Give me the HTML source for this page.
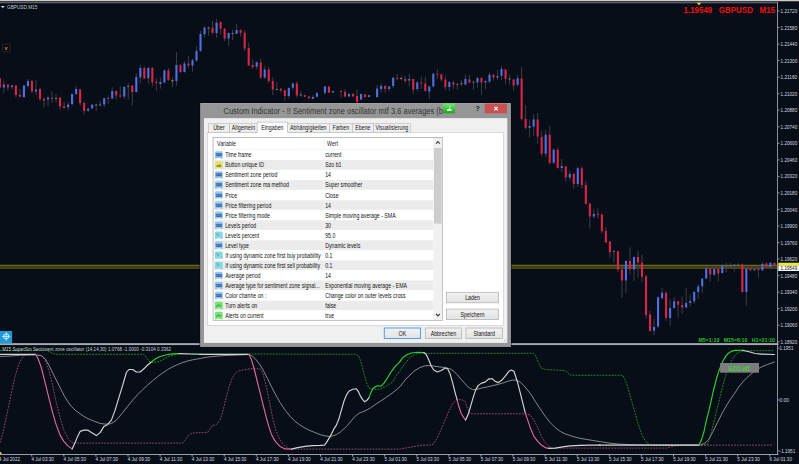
<!DOCTYPE html>
<html lang="de"><head><meta charset="utf-8"><title>GBPUSD,M15</title>
<style>html,body{margin:0;padding:0;background:#080e18;overflow:hidden}svg{display:block;font-family:"Liberation Sans",sans-serif}text{white-space:pre}</style></head><body>
<svg width="799" height="464" viewBox="0 0 799 464">
<rect width="799" height="464" fill="#080e18"/>
<g id="frame">
<rect x="0" y="0" width="799" height="1" fill="#cacaca"/>
<rect x="0" y="1" width="799" height="1" fill="#3a3e44"/>
<rect x="0" y="2" width="778" height="1" fill="#585e66"/>
<rect x="0" y="3" width="777" height="1" fill="#222832"/>
<rect x="777" y="2" width="1" height="453" fill="#8a9098"/>
<rect x="0" y="343.15" width="778.5" height="1.9" fill="#a6abb0"/>
<rect x="0" y="454" width="778.5" height="1" fill="#9aa0a6"/>
</g>
<g id="bidline">
<rect x="0" y="264" width="777" height="5.6" fill="#02061a"/>
<rect x="0" y="264.7" width="777" height="1.7" fill="#6b6b14"/>
<rect x="0" y="266.4" width="777" height="0.8" fill="#3a4416"/>
<rect x="0" y="267.2" width="777" height="1.7" fill="#5a4a14"/>
</g>
<g id="candles">
<path d="M-0.15,78.0V88.0M3.86,81.2V92.9M7.88,84.5V90.4M11.89,84.7V89.5M15.90,85.0V97.5M19.92,89.0V97.0M23.93,85.0V98.0M27.94,79.0V87.5M31.96,80.0V93.5M35.97,80.0V95.0M39.98,88.2V101.0M44.00,97.2V107.2M48.01,96.6V106.2M52.03,91.2V102.9M56.04,94.0V102.2M60.05,97.2V109.7M64.07,102.0V108.5M68.08,102.2V110.0M72.09,93.7V106.0M76.11,86.0V95.4M80.12,89.0V105.4M84.13,101.6V114.5M88.15,107.9V112.0M92.16,104.0V109.0M96.17,103.5V111.2M100.19,100.7V106.4M104.20,97.6V107.2M108.21,95.7V103.9M112.23,87.0V99.1M116.24,90.1V99.5M120.25,86.4V98.0M124.27,86.0V99.1M128.28,83.2V99.5M132.30,84.9V105.5M136.31,73.2V92.6M140.32,64.7V83.5M144.34,66.4V78.9M148.35,67.0V83.5M152.36,67.0V86.6M156.38,78.2V90.7M160.39,77.6V88.6M164.40,69.5V83.2M168.42,68.2V81.0M172.43,77.2V87.0M176.44,52.1V85.7M180.46,64.0V72.6M184.47,61.2V72.6M188.48,55.9V68.4M192.50,58.7V71.7M196.51,46.2V61.7M200.52,30.9V51.7M204.54,26.1V37.7M208.55,26.5V35.5M212.57,20.9V34.6M216.58,19.0V38.0M220.59,21.5V34.6M224.61,28.0V40.9M228.62,32.5V45.9M232.63,29.6V40.0M236.65,24.0V34.2M240.66,29.2V36.5M244.67,30.0V50.9M248.69,42.7V65.9M252.70,59.6V69.0M256.71,61.3V69.6M260.73,58.7V79.0M264.74,65.9V79.0M268.75,66.7V83.0M272.77,77.1V95.2M276.78,82.1V90.0M280.80,87.7V92.5M284.81,89.6V100.9M288.82,87.1V98.4M292.84,82.7V90.0M296.85,80.9V97.7M300.86,90.9V96.5M304.88,94.6V97.1M308.89,95.9V99.6M312.90,95.2V99.0M316.92,92.1V97.1M324.94,85.9V94.6M328.96,85.9V93.0M332.97,90.9V92.5M341.00,90.0V97.7M345.01,89.0V97.1M349.02,93.4V96.7M353.04,92.7V96.7M357.05,89.6V104.0M361.06,93.4V100.2M365.08,94.0V97.5M369.09,94.6V97.1M377.12,85.0V98.0M381.13,83.4V92.7M385.15,85.2V92.7M389.16,85.9V91.2M393.17,76.7V88.4M397.19,74.0V80.2M401.20,75.9V80.2M405.21,75.9V82.7M409.23,74.0V86.5M413.24,78.4V94.0M417.25,80.9V91.5M421.27,76.7V89.0M425.28,76.7V91.5M429.29,85.9V99.2M433.31,72.7V87.7M437.32,69.1V79.2M441.33,73.5V81.7M445.35,75.7V90.1M449.36,81.4V91.0M453.38,80.7V88.9M457.39,82.6V89.7M461.40,80.1V86.4M465.42,74.7V85.1M469.43,75.1V83.2M473.44,80.5V89.7M477.46,76.7V87.6M481.47,77.0V95.1M485.48,80.5V89.5M489.50,72.6V83.5M493.51,73.9V80.7M497.52,70.1V80.1M501.54,66.0V80.1M505.55,68.9V84.2M509.56,74.5V84.7M513.58,78.9V90.5M517.59,75.1V86.7M521.61,66.9V120.6M525.62,105.2V129.4M529.63,119.4V137.5M533.65,114.4V135.6M537.66,113.1V143.7M541.67,130.6V156.5M545.69,130.0V157.2M549.70,125.9V164.5M553.71,148.3V164.2M557.73,147.6V168.6M561.74,159.0V172.4M565.75,165.7V181.5M569.77,170.7V180.5M573.78,172.4V188.6M577.79,166.7V186.7M581.81,166.5V188.6M585.82,180.7V204.5M589.83,202.9V228.5M593.85,208.5V218.5M597.86,207.9V218.5M601.88,213.7V233.5M605.89,227.2V242.9M609.90,241.0V257.7M613.92,250.2V262.7M617.93,250.9V272.1M621.94,265.9V297.8M625.96,260.2V292.8M629.97,247.4V274.6M633.98,256.5V280.9M638.00,250.9V277.7M642.01,254.6V282.1M646.02,274.6V318.7M650.04,311.0V331.6M654.05,319.1V335.0M658.06,296.6V327.9M662.08,287.6V299.7M666.09,291.6V321.0M670.10,299.1V326.0M674.12,297.2V308.5M678.13,300.7V317.2M682.14,296.6V313.7M686.16,287.9V308.2M690.17,294.7V306.6M694.19,291.2V304.1M698.20,284.0V299.0M702.21,278.1V292.7M706.23,267.5V279.0M710.24,265.6V281.5M714.25,265.6V276.2M718.27,268.5V281.5M722.28,264.0V273.5M726.29,262.7V272.2M730.31,263.1V267.5M734.32,264.0V271.5M738.33,263.1V267.5M742.35,263.5V292.5M746.36,268.1V305.6M750.37,265.6V271.5M754.39,267.5V270.6M758.40,265.6V277.7M762.41,262.2V271.0M766.43,262.5V268.1M770.44,262.2V269.4M774.46,262.5V266.9" stroke="#3e3e40" stroke-width="1" fill="none"/>
<path d="M-1.20,78.2h2.1v9.3h-2.1zM6.83,84.5h2.1v3.0h-2.1zM14.85,85.4h2.1v9.6h-2.1zM18.87,95.0h2.1v1.7h-2.1zM30.91,81.0h2.1v10.6h-2.1zM38.94,88.9h2.1v10.1h-2.1zM42.95,98.7h2.1v1.9h-2.1zM50.98,97.7h2.1v1.0h-2.1zM59.00,97.5h2.1v9.1h-2.1zM63.02,106.2h2.1v1.7h-2.1zM79.07,89.5h2.1v13.5h-2.1zM83.08,103.0h2.1v8.0h-2.1zM107.16,98.0h2.1v1.1h-2.1zM115.19,91.0h2.1v4.5h-2.1zM119.20,95.4h2.1v1.2h-2.1zM131.25,85.4h2.1v6.6h-2.1zM143.29,67.9h2.1v10.6h-2.1zM151.31,67.9h2.1v14.7h-2.1zM155.33,81.7h2.1v1.3h-2.1zM167.37,70.4h2.1v9.7h-2.1zM179.41,65.2h2.1v7.0h-2.1zM187.43,63.4h2.1v2.1h-2.1zM211.52,27.7h2.1v5.0h-2.1zM219.54,22.1h2.1v6.6h-2.1zM223.56,28.7h2.1v9.7h-2.1zM239.61,30.2h2.1v2.5h-2.1zM243.62,32.7h2.1v15.7h-2.1zM247.64,48.1h2.1v17.4h-2.1zM251.65,65.1h2.1v1.8h-2.1zM259.68,62.5h2.1v15.0h-2.1zM267.70,69.4h2.1v11.5h-2.1zM271.72,81.1h2.1v8.5h-2.1zM279.75,88.7h2.1v1.8h-2.1zM283.76,90.2h2.1v5.7h-2.1zM295.80,83.4h2.1v12.1h-2.1zM303.83,95.2h2.1v1.5h-2.1zM307.84,96.5h2.1v1.5h-2.1zM327.91,86.5h2.1v6.2h-2.1zM339.95,90.9h2.1v1.0h-2.1zM343.96,92.1h2.1v4.4h-2.1zM351.99,94.0h2.1v2.5h-2.1zM356.00,95.9h2.1v7.1h-2.1zM364.03,94.6h2.1v2.5h-2.1zM384.10,86.1h2.1v2.9h-2.1zM396.14,77.7h2.1v1.0h-2.1zM404.16,79.0h2.1v2.1h-2.1zM412.19,79.0h2.1v10.6h-2.1zM420.22,82.5h2.1v1.0h-2.1zM424.23,83.4h2.1v7.5h-2.1zM436.27,73.8h2.1v1.0h-2.1zM440.28,74.2h2.1v5.3h-2.1zM444.30,79.5h2.1v7.5h-2.1zM452.33,82.4h2.1v2.3h-2.1zM468.38,79.5h2.1v2.9h-2.1zM480.42,77.9h2.1v4.7h-2.1zM492.46,75.1h2.1v2.5h-2.1zM504.50,69.5h2.1v9.4h-2.1zM512.53,79.5h2.1v5.9h-2.1zM520.56,78.4h2.1v40.6h-2.1zM524.57,119.0h2.1v8.7h-2.1zM536.61,119.6h2.1v17.0h-2.1zM540.62,137.1h2.1v16.6h-2.1zM548.65,134.7h2.1v28.0h-2.1zM556.68,149.8h2.1v18.2h-2.1zM564.70,166.4h2.1v11.0h-2.1zM572.73,173.9h2.1v10.0h-2.1zM580.76,168.2h2.1v16.7h-2.1zM584.77,184.9h2.1v19.1h-2.1zM588.78,203.4h2.1v13.2h-2.1zM596.81,213.5h2.1v1.2h-2.1zM600.83,214.4h2.1v16.8h-2.1zM604.84,231.0h2.1v11.5h-2.1zM608.85,241.6h2.1v10.6h-2.1zM616.88,251.2h2.1v18.4h-2.1zM620.89,269.4h2.1v11.2h-2.1zM628.92,260.9h2.1v8.3h-2.1zM636.95,257.1h2.1v5.4h-2.1zM640.96,262.7h2.1v14.0h-2.1zM644.97,276.2h2.1v38.8h-2.1zM648.99,314.5h2.1v16.5h-2.1zM665.04,292.8h2.1v25.1h-2.1zM677.08,301.2h2.1v3.5h-2.1zM681.10,305.0h2.1v2.5h-2.1zM709.19,268.5h2.1v5.9h-2.1zM717.22,269.0h2.1v4.5h-2.1zM741.30,264.4h2.1v27.5h-2.1zM749.32,268.5h2.1v1.7h-2.1zM757.35,268.7h2.1v1.3h-2.1zM765.38,263.5h2.1v3.4h-2.1zM773.41,263.1h2.1v2.5h-2.1z" fill="#dc2348"/>
<path d="M2.81,84.5h2.1v3.0h-2.1zM10.84,85.4h2.1v1.5h-2.1zM22.88,85.4h2.1v11.6h-2.1zM26.89,81.0h2.1v5.0h-2.1zM34.92,89.5h2.1v2.1h-2.1zM46.96,97.5h2.1v2.0h-2.1zM67.03,104.5h2.1v2.7h-2.1zM71.04,94.0h2.1v9.9h-2.1zM75.06,88.9h2.1v5.1h-2.1zM87.10,108.7h2.1v2.0h-2.1zM91.11,104.7h2.1v3.8h-2.1zM103.15,98.2h2.1v6.3h-2.1zM111.18,91.0h2.1v7.6h-2.1zM123.22,87.0h2.1v9.6h-2.1zM127.23,85.7h2.1v1.3h-2.1zM135.26,77.0h2.1v15.0h-2.1zM139.27,67.9h2.1v9.7h-2.1zM147.30,67.9h2.1v10.3h-2.1zM159.34,82.0h2.1v1.9h-2.1zM163.35,70.4h2.1v12.2h-2.1zM175.39,65.0h2.1v16.0h-2.1zM183.42,63.4h2.1v8.6h-2.1zM191.45,60.2h2.1v5.3h-2.1zM195.46,51.1h2.1v9.4h-2.1zM199.47,34.0h2.1v17.1h-2.1zM203.49,27.7h2.1v6.5h-2.1zM215.53,22.7h2.1v10.3h-2.1zM227.57,33.0h2.1v5.4h-2.1zM235.60,30.0h2.1v3.7h-2.1zM255.66,62.3h2.1v4.5h-2.1zM263.69,69.4h2.1v8.1h-2.1zM287.77,88.0h2.1v7.9h-2.1zM291.79,83.4h2.1v4.3h-2.1zM311.85,97.1h2.1v1.6h-2.1zM315.87,93.0h2.1v3.7h-2.1zM323.89,86.5h2.1v6.2h-2.1zM331.92,90.9h2.1v1.6h-2.1zM347.97,94.0h2.1v2.5h-2.1zM360.01,94.0h2.1v5.6h-2.1zM368.04,95.2h2.1v1.7h-2.1zM376.07,88.4h2.1v8.7h-2.1zM380.08,86.1h2.1v2.9h-2.1zM388.11,86.5h2.1v2.5h-2.1zM392.12,77.7h2.1v8.2h-2.1zM408.18,79.0h2.1v1.6h-2.1zM416.20,82.5h2.1v6.5h-2.1zM428.24,86.5h2.1v5.0h-2.1zM432.26,73.8h2.1v12.6h-2.1zM448.31,82.0h2.1v5.0h-2.1zM464.37,78.9h2.1v5.6h-2.1zM476.41,77.9h2.1v4.7h-2.1zM484.43,81.0h2.1v1.4h-2.1zM488.45,74.7h2.1v6.9h-2.1zM496.47,76.0h2.1v1.4h-2.1zM500.49,68.9h2.1v6.8h-2.1zM516.54,78.2h2.1v6.5h-2.1zM528.58,125.9h2.1v1.8h-2.1zM532.60,119.6h2.1v7.0h-2.1zM544.64,134.7h2.1v19.0h-2.1zM552.66,149.8h2.1v12.9h-2.1zM560.69,165.9h2.1v2.1h-2.1zM568.72,174.0h2.1v3.4h-2.1zM576.74,168.2h2.1v15.7h-2.1zM592.80,214.1h2.1v2.3h-2.1zM624.91,260.9h2.1v19.7h-2.1zM632.93,257.1h2.1v12.5h-2.1zM653.00,327.0h2.1v3.7h-2.1zM657.01,297.2h2.1v29.4h-2.1zM661.03,292.8h2.1v5.1h-2.1zM669.05,307.9h2.1v10.0h-2.1zM673.07,301.2h2.1v6.7h-2.1zM685.11,302.9h2.1v4.6h-2.1zM689.12,301.2h2.1v1.7h-2.1zM693.14,292.0h2.1v9.2h-2.1zM697.15,286.4h2.1v5.6h-2.1zM701.16,278.7h2.1v7.5h-2.1zM705.18,268.5h2.1v10.0h-2.1zM713.20,269.0h2.1v5.7h-2.1zM721.23,265.6h2.1v7.3h-2.1zM733.27,264.7h2.1v1.3h-2.1zM745.31,268.5h2.1v23.4h-2.1zM753.34,269.0h2.1v1.2h-2.1zM761.37,264.0h2.1v6.2h-2.1zM769.39,262.7h2.1v4.2h-2.1z" fill="#4f6fe6"/>
<path d="M54.99,98.0h2.1v0.9h-2.1zM95.12,104.5h2.1v0.9h-2.1zM99.14,104.5h2.1v1.0h-2.1zM171.38,80.1h2.1v1.3h-2.1zM207.50,27.5h2.1v0.9h-2.1zM231.58,33.0h2.1v1.0h-2.1zM275.73,89.0h2.1v0.9h-2.1zM299.81,94.6h2.1v0.9h-2.1zM400.15,78.0h2.1v1.0h-2.1zM456.34,83.9h2.1v0.9h-2.1zM460.35,83.2h2.1v1.0h-2.1zM472.39,81.7h2.1v0.9h-2.1zM508.51,78.6h2.1v0.9h-2.1zM612.87,250.9h2.1v0.9h-2.1zM725.24,265.6h2.1v0.9h-2.1zM729.26,265.6h2.1v0.9h-2.1zM737.28,264.7h2.1v0.9h-2.1z" fill="#808080"/>
</g>
<g id="priceaxis">
<rect x="778" y="10.5" width="1.6" height="1" fill="#8a9098"/>
<text x="780.60" y="13.05" font-size="5.8" fill="#d4dae0" textLength="16.60" lengthAdjust="spacingAndGlyphs">1.21720</text>
<rect x="778" y="27.0" width="1.6" height="1" fill="#8a9098"/>
<text x="780.60" y="29.59" font-size="5.8" fill="#d4dae0" textLength="16.60" lengthAdjust="spacingAndGlyphs">1.21580</text>
<rect x="778" y="43.6" width="1.6" height="1" fill="#8a9098"/>
<text x="780.60" y="46.13" font-size="5.8" fill="#d4dae0" textLength="16.60" lengthAdjust="spacingAndGlyphs">1.21440</text>
<rect x="778" y="60.1" width="1.6" height="1" fill="#8a9098"/>
<text x="780.60" y="62.67" font-size="5.8" fill="#d4dae0" textLength="16.60" lengthAdjust="spacingAndGlyphs">1.21300</text>
<rect x="778" y="76.7" width="1.6" height="1" fill="#8a9098"/>
<text x="780.60" y="79.21" font-size="5.8" fill="#d4dae0" textLength="16.60" lengthAdjust="spacingAndGlyphs">1.21160</text>
<rect x="778" y="93.2" width="1.6" height="1" fill="#8a9098"/>
<text x="780.60" y="95.75" font-size="5.8" fill="#d4dae0" textLength="16.60" lengthAdjust="spacingAndGlyphs">1.21020</text>
<rect x="778" y="109.7" width="1.6" height="1" fill="#8a9098"/>
<text x="780.60" y="112.29" font-size="5.8" fill="#d4dae0" textLength="16.60" lengthAdjust="spacingAndGlyphs">1.20880</text>
<rect x="778" y="126.3" width="1.6" height="1" fill="#8a9098"/>
<text x="780.60" y="128.83" font-size="5.8" fill="#d4dae0" textLength="16.60" lengthAdjust="spacingAndGlyphs">1.20740</text>
<rect x="778" y="142.8" width="1.6" height="1" fill="#8a9098"/>
<text x="780.60" y="145.37" font-size="5.8" fill="#d4dae0" textLength="16.60" lengthAdjust="spacingAndGlyphs">1.20600</text>
<rect x="778" y="159.4" width="1.6" height="1" fill="#8a9098"/>
<text x="780.60" y="161.91" font-size="5.8" fill="#d4dae0" textLength="16.60" lengthAdjust="spacingAndGlyphs">1.20460</text>
<rect x="778" y="175.9" width="1.6" height="1" fill="#8a9098"/>
<text x="780.60" y="178.45" font-size="5.8" fill="#d4dae0" textLength="16.60" lengthAdjust="spacingAndGlyphs">1.20320</text>
<rect x="778" y="192.4" width="1.6" height="1" fill="#8a9098"/>
<text x="780.60" y="194.99" font-size="5.8" fill="#d4dae0" textLength="16.60" lengthAdjust="spacingAndGlyphs">1.20180</text>
<rect x="778" y="209.0" width="1.6" height="1" fill="#8a9098"/>
<text x="780.60" y="211.53" font-size="5.8" fill="#d4dae0" textLength="16.60" lengthAdjust="spacingAndGlyphs">1.20040</text>
<rect x="778" y="225.5" width="1.6" height="1" fill="#8a9098"/>
<text x="780.60" y="228.07" font-size="5.8" fill="#d4dae0" textLength="16.60" lengthAdjust="spacingAndGlyphs">1.19900</text>
<rect x="778" y="242.1" width="1.6" height="1" fill="#8a9098"/>
<text x="780.60" y="244.61" font-size="5.8" fill="#d4dae0" textLength="16.60" lengthAdjust="spacingAndGlyphs">1.19760</text>
<rect x="778" y="258.6" width="1.6" height="1" fill="#8a9098"/>
<text x="780.60" y="261.15" font-size="5.8" fill="#d4dae0" textLength="16.60" lengthAdjust="spacingAndGlyphs">1.19620</text>
<rect x="778" y="275.1" width="1.6" height="1" fill="#8a9098"/>
<text x="780.60" y="277.69" font-size="5.8" fill="#d4dae0" textLength="16.60" lengthAdjust="spacingAndGlyphs">1.19480</text>
<rect x="778" y="291.7" width="1.6" height="1" fill="#8a9098"/>
<text x="780.60" y="294.23" font-size="5.8" fill="#d4dae0" textLength="16.60" lengthAdjust="spacingAndGlyphs">1.19340</text>
<rect x="778" y="308.2" width="1.6" height="1" fill="#8a9098"/>
<text x="780.60" y="310.77" font-size="5.8" fill="#d4dae0" textLength="16.60" lengthAdjust="spacingAndGlyphs">1.19200</text>
<rect x="778" y="324.8" width="1.6" height="1" fill="#8a9098"/>
<text x="780.60" y="327.31" font-size="5.8" fill="#d4dae0" textLength="16.60" lengthAdjust="spacingAndGlyphs">1.19060</text>
<rect x="778" y="341.3" width="1.6" height="1" fill="#8a9098"/>
<text x="780.60" y="343.85" font-size="5.8" fill="#d4dae0" textLength="16.60" lengthAdjust="spacingAndGlyphs">1.18920</text>
<rect x="778.3" y="265.2" width="20.7" height="5.8" fill="#f6f6f2"/>
<rect x="778.3" y="262.75" width="20.7" height="2.5" fill="#ecec20"/>
<text x="780.60" y="269.80" font-size="5.4" fill="#181828" textLength="16.60" lengthAdjust="spacingAndGlyphs">1.19549</text>
<text x="779.60" y="350.05" font-size="5.8" fill="#d4dae0" textLength="13.80" lengthAdjust="spacingAndGlyphs">1.1951</text>
<text x="779.60" y="402.05" font-size="5.8" fill="#d4dae0" textLength="9.20" lengthAdjust="spacingAndGlyphs">0.00</text>
<text x="779.60" y="452.85" font-size="5.8" fill="#d4dae0" textLength="15.60" lengthAdjust="spacingAndGlyphs">-1.1951</text>
<rect x="778" y="347.5" width="1.6" height="1" fill="#8a9098"/>
<rect x="778" y="399.5" width="1.6" height="1" fill="#8a9098"/>
<rect x="778" y="450.3" width="1.6" height="1" fill="#8a9098"/>
</g>
<g id="timeaxis">
<rect x="-0.9" y="455" width="1" height="1.6" fill="#9aa0a6"/>
<text x="-1.20" y="461.00" font-size="5.8" fill="#d4dae0" textLength="21.20" lengthAdjust="spacingAndGlyphs">4 Jul 2022</text>
<rect x="31.2" y="455" width="1" height="1.6" fill="#9aa0a6"/>
<text x="31.39" y="461.00" font-size="5.8" fill="#d4dae0" textLength="22.50" lengthAdjust="spacingAndGlyphs">4 Jul 03:30</text>
<rect x="63.3" y="455" width="1" height="1.6" fill="#9aa0a6"/>
<text x="63.48" y="461.00" font-size="5.8" fill="#d4dae0" textLength="22.50" lengthAdjust="spacingAndGlyphs">4 Jul 05:30</text>
<rect x="95.4" y="455" width="1" height="1.6" fill="#9aa0a6"/>
<text x="95.57" y="461.00" font-size="5.8" fill="#d4dae0" textLength="22.50" lengthAdjust="spacingAndGlyphs">4 Jul 07:30</text>
<rect x="127.5" y="455" width="1" height="1.6" fill="#9aa0a6"/>
<text x="127.66" y="461.00" font-size="5.8" fill="#d4dae0" textLength="22.50" lengthAdjust="spacingAndGlyphs">4 Jul 09:30</text>
<rect x="159.6" y="455" width="1" height="1.6" fill="#9aa0a6"/>
<text x="159.75" y="461.00" font-size="5.8" fill="#d4dae0" textLength="22.50" lengthAdjust="spacingAndGlyphs">4 Jul 11:30</text>
<rect x="191.6" y="455" width="1" height="1.6" fill="#9aa0a6"/>
<text x="191.84" y="461.00" font-size="5.8" fill="#d4dae0" textLength="22.50" lengthAdjust="spacingAndGlyphs">4 Jul 13:30</text>
<rect x="223.7" y="455" width="1" height="1.6" fill="#9aa0a6"/>
<text x="223.93" y="461.00" font-size="5.8" fill="#d4dae0" textLength="22.50" lengthAdjust="spacingAndGlyphs">4 Jul 15:30</text>
<rect x="255.8" y="455" width="1" height="1.6" fill="#9aa0a6"/>
<text x="256.02" y="461.00" font-size="5.8" fill="#d4dae0" textLength="22.50" lengthAdjust="spacingAndGlyphs">4 Jul 17:30</text>
<rect x="287.9" y="455" width="1" height="1.6" fill="#9aa0a6"/>
<text x="288.11" y="461.00" font-size="5.8" fill="#d4dae0" textLength="22.50" lengthAdjust="spacingAndGlyphs">4 Jul 19:30</text>
<rect x="320.0" y="455" width="1" height="1.6" fill="#9aa0a6"/>
<text x="320.20" y="461.00" font-size="5.8" fill="#d4dae0" textLength="22.50" lengthAdjust="spacingAndGlyphs">4 Jul 21:30</text>
<rect x="352.1" y="455" width="1" height="1.6" fill="#9aa0a6"/>
<text x="352.29" y="461.00" font-size="5.8" fill="#d4dae0" textLength="22.50" lengthAdjust="spacingAndGlyphs">4 Jul 23:30</text>
<rect x="384.2" y="455" width="1" height="1.6" fill="#9aa0a6"/>
<text x="384.38" y="461.00" font-size="5.8" fill="#d4dae0" textLength="22.50" lengthAdjust="spacingAndGlyphs">5 Jul 01:30</text>
<rect x="416.3" y="455" width="1" height="1.6" fill="#9aa0a6"/>
<text x="416.47" y="461.00" font-size="5.8" fill="#d4dae0" textLength="22.50" lengthAdjust="spacingAndGlyphs">5 Jul 03:30</text>
<rect x="448.4" y="455" width="1" height="1.6" fill="#9aa0a6"/>
<text x="448.56" y="461.00" font-size="5.8" fill="#d4dae0" textLength="22.50" lengthAdjust="spacingAndGlyphs">5 Jul 05:30</text>
<rect x="480.5" y="455" width="1" height="1.6" fill="#9aa0a6"/>
<text x="480.65" y="461.00" font-size="5.8" fill="#d4dae0" textLength="22.50" lengthAdjust="spacingAndGlyphs">5 Jul 07:30</text>
<rect x="512.5" y="455" width="1" height="1.6" fill="#9aa0a6"/>
<text x="512.74" y="461.00" font-size="5.8" fill="#d4dae0" textLength="22.50" lengthAdjust="spacingAndGlyphs">5 Jul 09:30</text>
<rect x="544.6" y="455" width="1" height="1.6" fill="#9aa0a6"/>
<text x="544.83" y="461.00" font-size="5.8" fill="#d4dae0" textLength="22.50" lengthAdjust="spacingAndGlyphs">5 Jul 11:30</text>
<rect x="576.7" y="455" width="1" height="1.6" fill="#9aa0a6"/>
<text x="576.92" y="461.00" font-size="5.8" fill="#d4dae0" textLength="22.50" lengthAdjust="spacingAndGlyphs">5 Jul 13:30</text>
<rect x="608.8" y="455" width="1" height="1.6" fill="#9aa0a6"/>
<text x="609.01" y="461.00" font-size="5.8" fill="#d4dae0" textLength="22.50" lengthAdjust="spacingAndGlyphs">5 Jul 15:30</text>
<rect x="640.9" y="455" width="1" height="1.6" fill="#9aa0a6"/>
<text x="641.10" y="461.00" font-size="5.8" fill="#d4dae0" textLength="22.50" lengthAdjust="spacingAndGlyphs">5 Jul 17:30</text>
<rect x="673.0" y="455" width="1" height="1.6" fill="#9aa0a6"/>
<text x="673.19" y="461.00" font-size="5.8" fill="#d4dae0" textLength="22.50" lengthAdjust="spacingAndGlyphs">5 Jul 19:30</text>
<rect x="705.1" y="455" width="1" height="1.6" fill="#9aa0a6"/>
<text x="705.28" y="461.00" font-size="5.8" fill="#d4dae0" textLength="22.50" lengthAdjust="spacingAndGlyphs">5 Jul 21:30</text>
<rect x="737.2" y="455" width="1" height="1.6" fill="#9aa0a6"/>
<text x="737.37" y="461.00" font-size="5.8" fill="#d4dae0" textLength="22.50" lengthAdjust="spacingAndGlyphs">5 Jul 23:30</text>
<rect x="769.3" y="455" width="1" height="1.6" fill="#9aa0a6"/>
<text x="769.46" y="461.00" font-size="5.8" fill="#d4dae0" textLength="22.50" lengthAdjust="spacingAndGlyphs">6 Jul 01:30</text>
<path d="M0,451.5 L2.2,454 L0,454z" fill="#f0d020"/>
</g>
<g id="oscillator" fill="none" stroke-linejoin="round" stroke-linecap="round">
<path d="M0.0,350.5 L46.3,350.5 L50.1,352.0 L53.8,353.8 L57.1,354.3 L143.9,354.3 L146.4,357.5 L148.9,361.3 L152.7,362.5 L157.7,361.8 L162.7,360.0 L167.7,357.0 L172.7,355.0 L179.0,353.5 L200.3,354.0 L248.8,354.0 L356.4,354.3 L358.9,356.3 L361.5,363.8 L364.0,373.8 L366.5,382.6 L369.0,388.1 L372.7,389.3 L377.7,389.3 L380.0,388.8 L386.2,386.3 L392.5,382.1 L396.2,375.8 L400.0,370.8 L405.0,363.3 L410.0,357.5 L415.0,354.0 L420.0,353.3 L533.9,353.3 L536.4,357.5 L538.9,363.8 L541.4,368.0 L545.2,369.5 L565.2,370.5 L567.7,373.0 L570.2,375.0 L575.2,375.3 L600.3,375.3 L622.8,375.3 L625.3,380.1 L627.8,387.6 L630.3,396.3 L632.8,405.1 L635.3,413.8 L637.8,422.6 L640.3,430.1 L642.8,436.4 L645.3,440.9 L647.8,443.9 L651.6,445.1 L700.4,445.1 L706.9,445.0 L708.8,441.2 L711.2,432.5 L713.8,422.5 L716.2,412.5 L718.8,402.5 L721.2,392.0 L723.1,384.5 L725.6,375.8 L728.1,368.9 L731.2,361.4 L733.8,357.0 L736.2,353.9 L740.0,351.8 L745.0,350.8 L773.1,350.5" stroke="#1f8c2a" stroke-width="1" stroke-dasharray="1.8,1.2" stroke-linecap="butt"/>
<path d="M0.0,442.6 L3.0,432.6 L7.0,413.8 L11.0,395.1 L14.8,377.5 L18.5,365.0 L22.0,358.0 L25.0,355.0 L35.0,354.8 L41.3,355.8 L45.1,360.0 L48.8,370.0 L52.6,385.1 L56.3,402.6 L60.1,417.6 L63.8,430.1 L67.6,437.6 L71.3,442.1 L73.8,443.1 L182.7,443.1 L185.2,440.1 L187.7,436.4 L190.2,433.9 L192.7,433.1 L200.3,432.6 L207.5,432.6 L210.0,428.9 L212.5,425.6 L216.3,424.6 L220.0,420.1 L222.5,412.6 L225.0,402.6 L227.5,392.6 L230.0,383.8 L232.5,377.5 L235.0,373.8 L237.5,371.3 L242.6,370.0 L250.1,368.8 L260.1,368.8 L262.6,372.5 L265.1,381.3 L267.6,392.6 L270.1,405.1 L272.6,417.6 L275.1,427.6 L277.6,435.1 L280.1,440.1 L283.9,445.1 L287.6,448.1 L291.4,449.1 L400.3,449.1 L407.5,447.6 L415.0,446.4 L422.5,445.1 L430.0,445.1 L433.8,443.9 L437.5,437.6 L441.3,428.9 L445.1,420.1 L448.8,411.3 L452.6,403.8 L456.3,400.1 L461.3,399.6 L465.1,401.3 L467.6,408.8 L470.1,413.8 L526.4,413.8 L530.2,415.1 L533.9,420.1 L537.7,427.6 L541.4,436.4 L545.2,442.6 L548.9,446.4 L552.7,448.1 L600.3,448.1 L666.6,448.1 L670.3,447.1 L674.1,445.9 L679.1,445.1 L773.0,445.1" stroke="#94466e" stroke-width="1" stroke-dasharray="1.8,1.2" stroke-linecap="butt"/>
<path d="M0.0,356.5 L10.0,356.0 L20.0,355.3 L35.0,354.8 L41.3,355.5 L45.1,358.8 L48.8,365.0 L52.6,372.5 L56.3,380.1 L60.1,387.6 L63.8,395.1 L67.6,401.3 L71.3,406.3 L75.1,410.1 L80.1,413.8 L85.1,417.1 L90.1,419.6 L95.1,421.6 L100.1,423.4 L105.1,424.1 L110.1,423.9 L113.9,422.1 L117.6,418.8 L122.7,412.6 L127.7,406.3 L132.7,400.1 L137.7,394.6 L142.7,389.6 L147.7,385.1 L152.7,380.6 L157.7,376.5 L162.7,373.0 L167.7,369.5 L172.7,366.8 L177.7,364.5 L182.7,362.5 L187.7,361.0 L192.7,359.8 L200.3,358.5 L207.5,357.0 L215.0,356.3 L225.0,355.5 L237.5,355.0 L248.8,354.5 L252.6,356.3 L256.3,360.0 L260.1,365.0 L263.8,371.3 L267.6,378.8 L271.3,386.3 L275.1,393.8 L280.1,402.6 L285.1,410.1 L290.1,416.3 L295.1,421.4 L300.1,425.1 L305.1,428.1 L310.1,430.6 L315.1,432.6 L320.2,434.6 L325.2,435.9 L328.9,436.4 L332.7,435.9 L336.4,434.6 L340.2,432.1 L343.9,428.9 L347.7,425.1 L351.4,420.6 L355.2,416.3 L358.9,413.3 L362.7,411.8 L366.5,410.1 L370.2,408.1 L375.2,404.6 L380.2,401.3 L385.2,398.1 L390.2,394.6 L395.2,390.8 L400.3,386.3 L405.0,380.1 L410.0,375.0 L415.0,370.5 L420.0,367.5 L425.0,365.8 L430.0,365.5 L435.0,366.3 L440.1,367.0 L445.1,367.5 L450.1,368.8 L453.8,371.3 L457.6,375.0 L461.3,379.5 L465.1,383.8 L468.8,387.6 L472.6,389.6 L476.3,389.6 L481.4,388.1 L487.6,386.8 L495.1,385.1 L502.6,383.1 L507.6,381.3 L512.6,380.1 L516.4,380.1 L520.2,382.1 L523.9,385.6 L527.7,390.1 L531.4,395.1 L535.2,401.3 L540.2,408.8 L545.2,416.3 L550.2,422.6 L555.2,427.6 L560.2,431.4 L565.2,433.9 L572.7,436.4 L580.2,438.4 L587.7,439.6 L595.2,440.9 L600.3,441.6 L609.0,443.1 L619.0,444.1 L629.0,444.6 L649.1,445.1 L698.6,445.1 L700.6,445.0 L705.0,443.1 L708.8,439.4 L712.5,432.5 L717.5,422.5 L722.5,412.5 L727.5,403.8 L730.5,399.2 L733.8,394.5 L738.8,387.0 L743.8,380.8 L748.8,375.8 L755.0,370.8 L761.2,367.0 L767.5,364.5 L774.4,362.0" stroke="#9c9ca0" stroke-width="0.85"/>
<path d="M0.0,354.3 L35.5,354.3" stroke="#d4d4d4" stroke-width="1.15"/>
<path d="M35.5,354.3 L37.8,358.0 L41.3,367.5 L45.1,382.6 L48.8,397.6 L52.6,412.6 L56.3,425.1 L60.1,435.1 L63.8,441.4 L67.6,445.6 L72.1,448.9" stroke="#dc6a94" stroke-width="1.15"/>
<path d="M72.1,448.9 L75.1,442.6 L77.6,436.4 L80.1,431.4 L83.9,430.1 L87.6,430.1 L91.4,432.6 L96.4,435.6 L100.1,432.6 L103.9,426.4 L107.6,424.4 L111.4,420.1 L115.1,410.1 L118.9,397.6 L122.7,385.1 L126.4,372.5 L128.9,369.5 L132.7,369.5 L136.4,372.0 L140.2,372.0 L143.9,368.8 L147.7,365.0 L151.4,362.0" stroke="#d4d4d4" stroke-width="1.15"/>
<path d="M151.4,362.0 L155.2,359.0 L160.2,356.5 L166.5,354.8 L172.7,353.9 L179.0,353.6" stroke="#2fd02f" stroke-width="1.15"/>
<path d="M179.0,353.6 L190.2,354.0 L200.3,354.3" stroke="#d4d4d4" stroke-width="1.15"/>
<path d="M200.0,354.3 L248.8,354.3" stroke="#d4d4d4" stroke-width="1.15"/>
<path d="M248.8,354.3 L251.3,359.3 L253.8,367.5 L256.3,377.5 L258.8,387.6 L261.3,397.6 L263.8,407.6 L266.3,417.6 L268.8,426.4 L271.3,433.9 L273.8,438.9 L276.3,442.6 L280.1,446.4 L285.1,448.9 L291.4,449.1" stroke="#dc6a94" stroke-width="1.15"/>
<path d="M291.4,449.1 L297.6,447.6 L305.1,446.4 L312.6,445.6 L320.2,445.4 L324.4,445.1 L326.4,442.6 L330.2,436.4 L333.9,428.9 L336.4,425.1 L338.9,418.8 L341.4,410.1 L343.9,401.3 L346.4,395.1 L348.9,391.3 L352.7,389.3 L356.4,388.8 L358.2,391.3 L360.2,395.6 L362.7,399.6 L364.7,401.8 L367.2,400.1 L369.0,397.6" stroke="#d4d4d4" stroke-width="1.15"/>
<path d="M369.0,397.6 L370.7,393.1 L372.7,388.8 L375.2,386.8 L377.7,385.8 L380.7,386.3 L384.0,383.1 L387.7,377.5 L391.5,371.3 L395.2,366.3 L400.3,361.3" stroke="#2fd02f" stroke-width="1.15"/>
<path d="M400.0,361.3 L402.5,358.0 L406.3,355.0 L411.3,353.0 L417.5,352.3 L423.8,352.5" stroke="#2fd02f" stroke-width="1.15"/>
<path d="M423.8,352.5 L426.3,354.5 L428.8,360.0 L431.3,366.3 L433.8,370.0 L437.5,372.0 L441.3,370.5 L445.1,368.0 L447.6,368.8 L450.1,373.8 L452.6,382.6 L455.1,392.6 L457.1,399.6" stroke="#d4d4d4" stroke-width="1.15"/>
<path d="M457.1,399.6 L458.8,406.3 L461.3,413.8 L463.8,417.6 L465.6,420.1" stroke="#dc6a94" stroke-width="1.15"/>
<path d="M465.6,420.1 L468.1,414.6 L470.6,406.3 L473.1,397.6 L475.6,390.1 L478.1,385.6 L481.4,383.1 L485.1,382.1 L488.9,378.8 L492.6,378.8 L495.1,381.3 L498.1,382.6 L501.4,380.6 L505.1,376.3 L508.9,371.3 L511.4,370.0 L513.9,371.3 L515.6,376.3 L517.6,382.6 L520.2,392.6 L522.7,402.6 L525.2,412.6" stroke="#d4d4d4" stroke-width="1.15"/>
<path d="M525.2,412.6 L527.7,420.1 L530.2,427.6 L533.9,436.4 L537.7,441.4 L541.4,445.1 L545.2,447.6 L548.9,448.4" stroke="#dc6a94" stroke-width="1.15"/>
<path d="M548.9,448.4 L555.2,448.1 L562.7,446.9 L570.2,445.9 L580.2,445.4 L590.2,445.1 L600.3,445.1" stroke="#d4d4d4" stroke-width="1.15"/>
<path d="M599.0,445.1 L698.7,445.1" stroke="#d4d4d4" stroke-width="1.15"/>
<path d="M698.8,445.2 L701.2,440.6 L703.8,432.5 L706.2,421.2 L708.8,411.2 L711.2,400.6 L713.1,392.0 L715.0,384.5 L716.9,377.0 L718.8,371.4 L720.6,366.4 L723.1,360.8 L725.6,356.4 L728.1,353.5 L731.2,351.4 L735.0,350.4 L742.5,350.3" stroke="#2fd02f" stroke-width="1.15"/>
<path d="M742.5,350.3 L750.0,352.0 L755.0,353.5 L761.2,354.1 L774.4,354.5" stroke="#d4d4d4" stroke-width="1.15"/>
</g>
<g id="chartlabels">
<path d="M0.9,5.9 L4.8,5.9 L2.85,8.1z" fill="#f0f0f0"/>
<text x="7.00" y="8.90" font-size="5.4" fill="#c4ccd4" textLength="30.30" lengthAdjust="spacingAndGlyphs">GBPUSD,M15</text>
<rect x="2.3" y="44.2" width="7.6" height="7.6" rx="1" fill="#0a0a0c" stroke="#3c3026" stroke-width="0.8"/>
<text x="6.10" y="49.90" font-size="5.6" fill="#d8d8d8" text-anchor="middle">v</text>
<text x="683.50" y="13.30" font-size="9.2" fill="#f01010" textLength="91.50" lengthAdjust="spacingAndGlyphs" font-weight="bold">1.19549   GBPUSD   M15</text>
<path d="M696.7,2.7 L701.2,2.7 L698.95,5.3z" fill="#f0e020"/>
<text x="698.50" y="341.80" font-size="5.6" fill="#22c422" textLength="76.50" lengthAdjust="spacingAndGlyphs" font-weight="bold">M5=1:10   M15=6:10   H1=21:10</text>
<rect x="0" y="331" width="12.1" height="12.2" fill="#1c9ad8"/>
<circle cx="6.2" cy="336.4" r="2.6" fill="none" stroke="#e8f4ff" stroke-width="0.9"/>
<path d="M6.2,332.2V340.6M2,336.4H10.4" stroke="#e8f4ff" stroke-width="0.8"/>
<text x="2.20" y="351.30" font-size="5.2" fill="#c4ccd4" textLength="169.00" lengthAdjust="spacingAndGlyphs">M15 SuperSm Sentiment zone oscillator (14,14,30) 1.0768 -1.0000 -0.3104 0.3362</text>
<rect x="720.1" y="363.0" width="38.9" height="9.7" fill="#7d7d7d"/>
<text x="728.20" y="370.70" font-size="7.2" fill="#34d834" textLength="21.20" lengthAdjust="spacingAndGlyphs" stroke="#30e030" stroke-width="0.15">SZO-off</text>
</g>
<g id="dialog">
<rect x="199.6" y="102.4" width="311.85" height="245.05" fill="#030814"/>
<rect x="200.2" y="103.0" width="310.65" height="243.85" fill="#a6a6a6"/>
<rect x="201.0" y="103.8" width="309.05" height="242.25" fill="#969696"/>
<rect x="204.0" y="118.15" width="303.3" height="224.75" fill="#f0f0f0"/>
<text x="223.50" y="113.50" font-size="8.3" fill="#343434" textLength="219.50" lengthAdjust="spacingAndGlyphs">Custom Indicator - !! Sentiment zone oscillator mtf 3.6 averages (b</text>
<defs><linearGradient id="gg" x1="0" y1="0" x2="0" y2="1"><stop offset="0" stop-color="#6fe66f"/><stop offset="1" stop-color="#18a818"/></linearGradient></defs>
<rect x="443.1" y="103.6" width="11.9" height="9.7" fill="url(#gg)"/>
<rect x="447" y="109" width="4.6" height="1.8" fill="#f4fff4"/><path d="M449.3,109 L450.2,105.6" stroke="#d8f8d8" stroke-width="0.8"/>
<text x="477.60" y="111.20" font-size="7" fill="#202020" font-weight="bold" text-anchor="middle">?</text>
<rect x="484.75" y="103.6" width="22.15" height="9.7" fill="#c75050"/>
<path d="M494.2,106.8 L497.8,110.4 M497.8,106.8 L494.2,110.4" stroke="#fff" stroke-width="1.1"/>
<rect x="207.5" y="132.25" width="296.1" height="193.4" fill="#fff" stroke="#c4c4c4" stroke-width="0.6"/>
<rect x="208.5" y="123.75" width="20.90" height="8.5" fill="#efefef" stroke="#b4b4b4" stroke-width="0.6"/>
<text x="218.95" y="130.30" font-size="6.8" fill="#181818" textLength="11.49" lengthAdjust="spacingAndGlyphs" text-anchor="middle">Über</text>
<rect x="229.4" y="123.75" width="28.10" height="8.5" fill="#efefef" stroke="#b4b4b4" stroke-width="0.6"/>
<text x="243.45" y="130.30" font-size="6.8" fill="#181818" textLength="23.27" lengthAdjust="spacingAndGlyphs" text-anchor="middle">Allgemein</text>
<rect x="287.2" y="123.75" width="42.20" height="8.5" fill="#efefef" stroke="#b4b4b4" stroke-width="0.6"/>
<text x="308.30" y="130.30" font-size="6.8" fill="#181818" textLength="36.54" lengthAdjust="spacingAndGlyphs" text-anchor="middle">Abhängigkeiten</text>
<rect x="329.4" y="123.75" width="22.85" height="8.5" fill="#efefef" stroke="#b4b4b4" stroke-width="0.6"/>
<text x="340.82" y="130.30" font-size="6.8" fill="#181818" textLength="16.79" lengthAdjust="spacingAndGlyphs" text-anchor="middle">Farben</text>
<rect x="352.25" y="123.75" width="21.25" height="8.5" fill="#efefef" stroke="#b4b4b4" stroke-width="0.6"/>
<text x="362.88" y="130.30" font-size="6.8" fill="#181818" textLength="15.32" lengthAdjust="spacingAndGlyphs" text-anchor="middle">Ebene</text>
<rect x="373.5" y="123.75" width="36.70" height="8.5" fill="#efefef" stroke="#b4b4b4" stroke-width="0.6"/>
<text x="391.85" y="130.30" font-size="6.8" fill="#181818" textLength="32.90" lengthAdjust="spacingAndGlyphs" text-anchor="middle">Visualisierung</text>
<rect x="257.2" y="122.25" width="30.3" height="10.6" fill="#fff"/>
<path d="M257.2,132.4V122.25H287.5V132.4" fill="none" stroke="#b4b4b4" stroke-width="0.6"/>
<text x="272.35" y="129.90" font-size="6.8" fill="#181818" textLength="22.40" lengthAdjust="spacingAndGlyphs" text-anchor="middle">Eingaben</text>
<rect x="213.1" y="137.5" width="229.4" height="182.8" fill="#fff" stroke="#a8acb6" stroke-width="0.8"/>
<rect x="213.6" y="149.5" width="219.6" height="0.5" fill="#e4eaf2"/>
<rect x="323.6" y="138" width="0.5" height="11.5" fill="#e4eaf2"/>
<text x="217.00" y="146.10" font-size="6.8" fill="#282828" textLength="19.05" lengthAdjust="spacingAndGlyphs">Variable</text>
<text x="327.00" y="146.10" font-size="6.8" fill="#282828" textLength="11.09" lengthAdjust="spacingAndGlyphs">Wert</text>
<clipPath id="cv"><rect x="324" y="138" width="109" height="182"/></clipPath>
<path d="M215.0,152.50q0,-1.3 1.3,-1.3h5.1q1.3,0 1.3,1.3v6.2h-1.7l-0.5,-0.7h-3.3l-0.5,0.7h-1.7z" fill="#96c6f4"/>
<rect x="215.6" y="153.30" width="6.5" height="3.3" fill="#6ea4e2"/>
<text x="215.90" y="156.35" font-size="3.4" fill="#183868" textLength="5.90" lengthAdjust="spacingAndGlyphs" font-weight="bold">123</text>
<text x="225.20" y="157.35" font-size="6.8" fill="#141414" textLength="26.20" lengthAdjust="spacingAndGlyphs">Time frame</text>
<text x="325.20" y="157.35" font-size="6.8" fill="#141414" textLength="16.24" lengthAdjust="spacingAndGlyphs" clip-path="url(#cv)">current</text>
<rect x="213.6" y="160.04" width="219.6" height="9.6" fill="#ebebeb"/>
<rect x="323.6" y="160.04" width="0.5" height="9.6" fill="#f8f8f8"/>
<path d="M215.0,162.54q0,-1.3 1.3,-1.3h5.1q1.3,0 1.3,1.3v6.2h-1.7l-0.5,-0.7h-3.3l-0.5,0.7h-1.7z" fill="#e8e070"/>
<text x="216.40" y="166.54" font-size="3.8" fill="#6a6410" textLength="4.90" lengthAdjust="spacingAndGlyphs" font-weight="bold">ab</text>
<text x="225.20" y="167.39" font-size="6.8" fill="#141414" textLength="38.88" lengthAdjust="spacingAndGlyphs">Button unique ID</text>
<text x="325.20" y="167.39" font-size="6.8" fill="#141414" textLength="16.25" lengthAdjust="spacingAndGlyphs" clip-path="url(#cv)">Szo b1</text>
<path d="M215.0,172.58q0,-1.3 1.3,-1.3h5.1q1.3,0 1.3,1.3v6.2h-1.7l-0.5,-0.7h-3.3l-0.5,0.7h-1.7z" fill="#96c6f4"/>
<rect x="215.6" y="173.38" width="6.5" height="3.3" fill="#6ea4e2"/>
<text x="215.90" y="176.43" font-size="3.4" fill="#183868" textLength="5.90" lengthAdjust="spacingAndGlyphs" font-weight="bold">123</text>
<text x="225.20" y="177.43" font-size="6.8" fill="#141414" textLength="52.23" lengthAdjust="spacingAndGlyphs">Sentiment zone period</text>
<text x="325.20" y="177.43" font-size="6.8" fill="#141414" textLength="5.81" lengthAdjust="spacingAndGlyphs" clip-path="url(#cv)">14</text>
<rect x="213.6" y="180.12" width="219.6" height="9.6" fill="#ebebeb"/>
<rect x="323.6" y="180.12" width="0.5" height="9.6" fill="#f8f8f8"/>
<path d="M215.0,182.62q0,-1.3 1.3,-1.3h5.1q1.3,0 1.3,1.3v6.2h-1.7l-0.5,-0.7h-3.3l-0.5,0.7h-1.7z" fill="#96c6f4"/>
<rect x="215.6" y="183.42" width="6.5" height="3.3" fill="#6ea4e2"/>
<text x="215.90" y="186.47" font-size="3.4" fill="#183868" textLength="5.90" lengthAdjust="spacingAndGlyphs" font-weight="bold">123</text>
<text x="225.20" y="187.47" font-size="6.8" fill="#141414" textLength="63.83" lengthAdjust="spacingAndGlyphs">Sentiment zone ma method</text>
<text x="325.20" y="187.47" font-size="6.8" fill="#141414" textLength="37.14" lengthAdjust="spacingAndGlyphs" clip-path="url(#cv)">Super smoother</text>
<path d="M215.0,192.66q0,-1.3 1.3,-1.3h5.1q1.3,0 1.3,1.3v6.2h-1.7l-0.5,-0.7h-3.3l-0.5,0.7h-1.7z" fill="#96c6f4"/>
<rect x="215.6" y="193.46" width="6.5" height="3.3" fill="#6ea4e2"/>
<text x="215.90" y="196.51" font-size="3.4" fill="#183868" textLength="5.90" lengthAdjust="spacingAndGlyphs" font-weight="bold">123</text>
<text x="225.20" y="197.51" font-size="6.8" fill="#141414" textLength="11.89" lengthAdjust="spacingAndGlyphs">Price</text>
<text x="325.20" y="197.51" font-size="6.8" fill="#141414" textLength="13.35" lengthAdjust="spacingAndGlyphs" clip-path="url(#cv)">Close</text>
<rect x="213.6" y="200.20" width="219.6" height="9.6" fill="#ebebeb"/>
<rect x="323.6" y="200.20" width="0.5" height="9.6" fill="#f8f8f8"/>
<path d="M215.0,202.70q0,-1.3 1.3,-1.3h5.1q1.3,0 1.3,1.3v6.2h-1.7l-0.5,-0.7h-3.3l-0.5,0.7h-1.7z" fill="#96c6f4"/>
<rect x="215.6" y="203.50" width="6.5" height="3.3" fill="#6ea4e2"/>
<text x="215.90" y="206.55" font-size="3.4" fill="#183868" textLength="5.90" lengthAdjust="spacingAndGlyphs" font-weight="bold">123</text>
<text x="225.20" y="207.55" font-size="6.8" fill="#141414" textLength="46.13" lengthAdjust="spacingAndGlyphs">Price filtering period</text>
<text x="325.20" y="207.55" font-size="6.8" fill="#141414" textLength="5.81" lengthAdjust="spacingAndGlyphs" clip-path="url(#cv)">14</text>
<path d="M215.0,212.74q0,-1.3 1.3,-1.3h5.1q1.3,0 1.3,1.3v6.2h-1.7l-0.5,-0.7h-3.3l-0.5,0.7h-1.7z" fill="#96c6f4"/>
<rect x="215.6" y="213.54" width="6.5" height="3.3" fill="#6ea4e2"/>
<text x="215.90" y="216.59" font-size="3.4" fill="#183868" textLength="5.90" lengthAdjust="spacingAndGlyphs" font-weight="bold">123</text>
<text x="225.20" y="217.59" font-size="6.8" fill="#141414" textLength="44.68" lengthAdjust="spacingAndGlyphs">Price filtering mode</text>
<text x="325.20" y="217.59" font-size="6.8" fill="#141414" textLength="70.49" lengthAdjust="spacingAndGlyphs" clip-path="url(#cv)">Simple moving average - SMA</text>
<rect x="213.6" y="220.28" width="219.6" height="9.6" fill="#ebebeb"/>
<rect x="323.6" y="220.28" width="0.5" height="9.6" fill="#f8f8f8"/>
<path d="M215.0,222.78q0,-1.3 1.3,-1.3h5.1q1.3,0 1.3,1.3v6.2h-1.7l-0.5,-0.7h-3.3l-0.5,0.7h-1.7z" fill="#96c6f4"/>
<rect x="215.6" y="223.58" width="6.5" height="3.3" fill="#6ea4e2"/>
<text x="215.90" y="226.63" font-size="3.4" fill="#183868" textLength="5.90" lengthAdjust="spacingAndGlyphs" font-weight="bold">123</text>
<text x="225.20" y="227.63" font-size="6.8" fill="#141414" textLength="31.05" lengthAdjust="spacingAndGlyphs">Levels period</text>
<text x="325.20" y="227.63" font-size="6.8" fill="#141414" textLength="5.81" lengthAdjust="spacingAndGlyphs" clip-path="url(#cv)">30</text>
<path d="M215.0,232.82q0,-1.3 1.3,-1.3h5.1q1.3,0 1.3,1.3v6.2h-1.7l-0.5,-0.7h-3.3l-0.5,0.7h-1.7z" fill="#84d8e4"/>
<text x="215.90" y="235.92" font-size="3.8" fill="#2a8494" font-weight="bold">½</text>
<text x="225.20" y="237.67" font-size="6.8" fill="#141414" textLength="33.95" lengthAdjust="spacingAndGlyphs">Levels percent</text>
<text x="325.20" y="237.67" font-size="6.8" fill="#141414" textLength="10.16" lengthAdjust="spacingAndGlyphs" clip-path="url(#cv)">95.0</text>
<rect x="213.6" y="240.36" width="219.6" height="9.6" fill="#ebebeb"/>
<rect x="323.6" y="240.36" width="0.5" height="9.6" fill="#f8f8f8"/>
<path d="M215.0,242.86q0,-1.3 1.3,-1.3h5.1q1.3,0 1.3,1.3v6.2h-1.7l-0.5,-0.7h-3.3l-0.5,0.7h-1.7z" fill="#96c6f4"/>
<rect x="215.6" y="243.66" width="6.5" height="3.3" fill="#6ea4e2"/>
<text x="215.90" y="246.71" font-size="3.4" fill="#183868" textLength="5.90" lengthAdjust="spacingAndGlyphs" font-weight="bold">123</text>
<text x="225.20" y="247.71" font-size="6.8" fill="#141414" textLength="23.79" lengthAdjust="spacingAndGlyphs">Level type</text>
<text x="325.20" y="247.71" font-size="6.8" fill="#141414" textLength="35.10" lengthAdjust="spacingAndGlyphs" clip-path="url(#cv)">Dynamic levels</text>
<path d="M215.0,252.90q0,-1.3 1.3,-1.3h5.1q1.3,0 1.3,1.3v6.2h-1.7l-0.5,-0.7h-3.3l-0.5,0.7h-1.7z" fill="#84d8e4"/>
<text x="215.90" y="256.00" font-size="3.8" fill="#2a8494" font-weight="bold">½</text>
<text x="225.20" y="257.75" font-size="6.8" fill="#141414" textLength="95.45" lengthAdjust="spacingAndGlyphs">If using dynamic zone first buy probability</text>
<text x="325.20" y="257.75" font-size="6.8" fill="#141414" textLength="7.26" lengthAdjust="spacingAndGlyphs" clip-path="url(#cv)">0.1</text>
<rect x="213.6" y="260.44" width="219.6" height="9.6" fill="#ebebeb"/>
<rect x="323.6" y="260.44" width="0.5" height="9.6" fill="#f8f8f8"/>
<path d="M215.0,262.94q0,-1.3 1.3,-1.3h5.1q1.3,0 1.3,1.3v6.2h-1.7l-0.5,-0.7h-3.3l-0.5,0.7h-1.7z" fill="#84d8e4"/>
<text x="215.90" y="266.04" font-size="3.8" fill="#2a8494" font-weight="bold">½</text>
<text x="225.20" y="267.79" font-size="6.8" fill="#141414" textLength="94.87" lengthAdjust="spacingAndGlyphs">If using dynamic zone first sell probability</text>
<text x="325.20" y="267.79" font-size="6.8" fill="#141414" textLength="7.26" lengthAdjust="spacingAndGlyphs" clip-path="url(#cv)">0.1</text>
<path d="M215.0,272.98q0,-1.3 1.3,-1.3h5.1q1.3,0 1.3,1.3v6.2h-1.7l-0.5,-0.7h-3.3l-0.5,0.7h-1.7z" fill="#96c6f4"/>
<rect x="215.6" y="273.78" width="6.5" height="3.3" fill="#6ea4e2"/>
<text x="215.90" y="276.83" font-size="3.4" fill="#183868" textLength="5.90" lengthAdjust="spacingAndGlyphs" font-weight="bold">123</text>
<text x="225.20" y="277.83" font-size="6.8" fill="#141414" textLength="35.31" lengthAdjust="spacingAndGlyphs">Average period</text>
<text x="325.20" y="277.83" font-size="6.8" fill="#141414" textLength="5.81" lengthAdjust="spacingAndGlyphs" clip-path="url(#cv)">14</text>
<rect x="213.6" y="280.52" width="219.6" height="9.6" fill="#ebebeb"/>
<rect x="323.6" y="280.52" width="0.5" height="9.6" fill="#f8f8f8"/>
<path d="M215.0,283.02q0,-1.3 1.3,-1.3h5.1q1.3,0 1.3,1.3v6.2h-1.7l-0.5,-0.7h-3.3l-0.5,0.7h-1.7z" fill="#96c6f4"/>
<rect x="215.6" y="283.82" width="6.5" height="3.3" fill="#6ea4e2"/>
<text x="215.90" y="286.87" font-size="3.4" fill="#183868" textLength="5.90" lengthAdjust="spacingAndGlyphs" font-weight="bold">123</text>
<text x="225.20" y="287.87" font-size="6.8" fill="#141414" textLength="94.49" lengthAdjust="spacingAndGlyphs">Average type for sentiment zone signal...</text>
<text x="325.20" y="287.87" font-size="6.8" fill="#141414" textLength="81.82" lengthAdjust="spacingAndGlyphs" clip-path="url(#cv)">Exponential moving average - EMA</text>
<path d="M215.0,293.06q0,-1.3 1.3,-1.3h5.1q1.3,0 1.3,1.3v6.2h-1.7l-0.5,-0.7h-3.3l-0.5,0.7h-1.7z" fill="#96c6f4"/>
<rect x="215.6" y="293.86" width="6.5" height="3.3" fill="#6ea4e2"/>
<text x="215.90" y="296.91" font-size="3.4" fill="#183868" textLength="5.90" lengthAdjust="spacingAndGlyphs" font-weight="bold">123</text>
<text x="225.20" y="297.91" font-size="6.8" fill="#141414" textLength="41.20" lengthAdjust="spacingAndGlyphs">Color chanhe on :</text>
<text x="325.20" y="297.91" font-size="6.8" fill="#141414" textLength="80.37" lengthAdjust="spacingAndGlyphs" clip-path="url(#cv)">Change color on outer levels cross</text>
<rect x="213.6" y="300.60" width="219.6" height="9.6" fill="#ebebeb"/>
<rect x="323.6" y="300.60" width="0.5" height="9.6" fill="#f8f8f8"/>
<path d="M215.0,303.10q0,-1.3 1.3,-1.3h5.1q1.3,0 1.3,1.3v6.2h-1.7l-0.5,-0.7h-3.3l-0.5,0.7h-1.7z" fill="#78e478"/>
<path d="M216.3,306.90 l2,-2.2 l1.3,1.2 l1.6,-0.2" fill="none" stroke="#1a8a1a" stroke-width="0.9"/>
<text x="225.20" y="307.95" font-size="6.8" fill="#141414" textLength="32.01" lengthAdjust="spacingAndGlyphs">Turn alerts on</text>
<text x="325.20" y="307.95" font-size="6.8" fill="#141414" textLength="11.03" lengthAdjust="spacingAndGlyphs" clip-path="url(#cv)">false</text>
<path d="M215.0,313.14q0,-1.3 1.3,-1.3h5.1q1.3,0 1.3,1.3v6.2h-1.7l-0.5,-0.7h-3.3l-0.5,0.7h-1.7z" fill="#78e478"/>
<path d="M216.3,316.94 l2,-2.2 l1.3,1.2 l1.6,-0.2" fill="none" stroke="#1a8a1a" stroke-width="0.9"/>
<text x="225.20" y="317.99" font-size="6.8" fill="#141414" textLength="38.29" lengthAdjust="spacingAndGlyphs">Alerts on current</text>
<text x="325.20" y="317.99" font-size="6.8" fill="#141414" textLength="8.99" lengthAdjust="spacingAndGlyphs" clip-path="url(#cv)">true</text>
<rect x="433.3" y="138" width="8.9" height="182" fill="#f0f0f0"/>
<rect x="434" y="148" width="7.6" height="75.6" fill="#cdcdcd"/>
<path d="M436,143.6 l1.9,-1.9 l1.9,1.9" fill="none" stroke="#404040" stroke-width="1.2"/>
<path d="M436,314 l1.9,1.9 l1.9,-1.9" fill="none" stroke="#404040" stroke-width="1.2"/>
<defs><linearGradient id="bg" x1="0" y1="0" x2="0" y2="1"><stop offset="0" stop-color="#f2f2f2"/><stop offset="1" stop-color="#e2e2e2"/></linearGradient></defs>
<rect x="446.6" y="292.3" width="51.80" height="10.50" fill="url(#bg)" stroke="#acacac" stroke-width="0.7"/>
<text x="472.50" y="299.90" font-size="6.8" fill="#141414" textLength="14.74" lengthAdjust="spacingAndGlyphs" text-anchor="middle">Laden</text>
<rect x="446.6" y="309.1" width="51.80" height="10.50" fill="url(#bg)" stroke="#acacac" stroke-width="0.7"/>
<text x="472.50" y="316.70" font-size="6.8" fill="#141414" textLength="23.86" lengthAdjust="spacingAndGlyphs" text-anchor="middle">Speichern</text>
<rect x="384.3" y="328.0" width="36.20" height="10.50" fill="url(#bg)" stroke="#4aa0f4" stroke-width="1.0"/>
<text x="402.40" y="335.60" font-size="6.8" fill="#141414" textLength="7.66" lengthAdjust="spacingAndGlyphs" text-anchor="middle">OK</text>
<rect x="425.3" y="328.0" width="36.30" height="10.50" fill="url(#bg)" stroke="#acacac" stroke-width="0.7"/>
<text x="443.45" y="335.60" font-size="6.8" fill="#141414" textLength="25.63" lengthAdjust="spacingAndGlyphs" text-anchor="middle">Abbrechen</text>
<rect x="465.9" y="328.0" width="36.50" height="10.50" fill="url(#bg)" stroke="#acacac" stroke-width="0.7"/>
<text x="484.15" y="335.60" font-size="6.8" fill="#141414" textLength="21.51" lengthAdjust="spacingAndGlyphs" text-anchor="middle">Standard</text>
<path d="M505.6,339.6h0.8M504.2,341h0.8M505.6,341h0.8" stroke="#b0b0b0" stroke-width="0.8"/>
</g>
</svg></body></html>
